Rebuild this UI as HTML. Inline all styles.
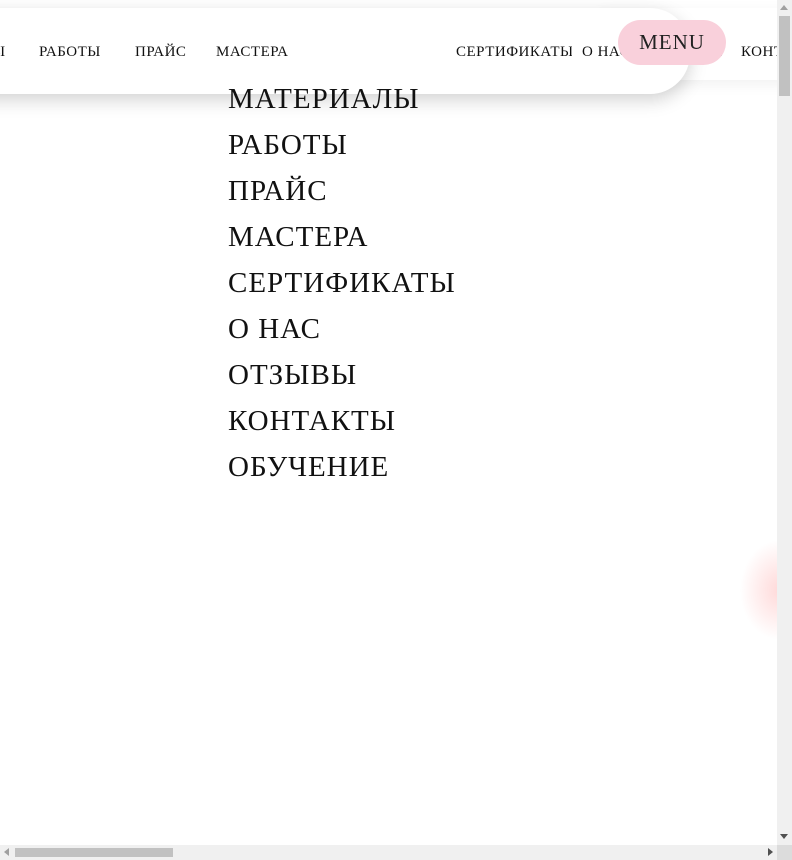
<!DOCTYPE html>
<html><head><meta charset="utf-8"><style>
html,body{margin:0;padding:0;width:792px;height:860px;overflow:hidden;background:#fff;font-family:"Liberation Serif",serif;}
.wrap{position:relative;width:792px;height:860px;overflow:hidden;}
.bar{position:absolute;left:-40px;top:8px;width:730px;height:86px;background:#fff;border-radius:0 40px 40px 0;box-shadow:0 6px 18px rgba(0,0,0,.18);}
.back{position:absolute;left:600px;top:8px;width:190px;height:72px;background:#fff;box-shadow:0 4px 14px rgba(0,0,0,.06);}
.nav{position:absolute;top:44px;font-size:15px;letter-spacing:0.5px;color:#111;white-space:nowrap;}
.menu{position:absolute;left:618px;top:20px;width:108px;height:45px;border-radius:23px;background:#f9d0db;color:#222;font-size:21px;letter-spacing:1px;text-align:center;line-height:45px;}
.list{position:absolute;left:228px;top:76px;}
.list div{font-size:29px;letter-spacing:1px;line-height:46px;color:#111;white-space:nowrap;}
.vs{position:absolute;left:777px;top:0;width:15px;height:845px;background:#f0f0f0;}
.vth{position:absolute;left:779px;top:16px;width:11px;height:80px;background:#c1c1c1;}
.hs{position:absolute;left:0;top:845px;width:777px;height:15px;background:#f0f0f0;}
.hth{position:absolute;left:15px;top:848px;width:158px;height:9px;background:#c1c1c1;}
.corner{position:absolute;left:777px;top:845px;width:15px;height:15px;background:#dcdcdc;}
.glow{position:absolute;left:740px;top:540px;width:80px;height:100px;border-radius:50%;background:radial-gradient(closest-side,rgba(255,200,200,.7),rgba(255,220,220,0));}
</style></head><body><div class="wrap">
<div class="back"></div>
<div class="bar"></div>
<div class="nav" style="left:-8px">Ы</div>
<div class="nav" style="left:39px">РАБОТЫ</div>
<div class="nav" style="left:135px">ПРАЙС</div>
<div class="nav" style="left:216px">МАСТЕРА</div>
<div class="nav" style="left:456px;width:116px;overflow:hidden">СЕРТИФИКАТЫ</div>
<div class="nav" style="left:582px">О НАС</div>
<div class="nav" style="left:656px">ОТЗЫВЫ</div>
<div class="nav" style="left:741px">КОНТАКТЫ</div>
<div class="menu">MENU</div>
<div class="list">
<div>МАТЕРИАЛЫ</div><div>РАБОТЫ</div><div>ПРАЙС</div><div>МАСТЕРА</div><div>СЕРТИФИКАТЫ</div><div>О НАС</div><div>ОТЗЫВЫ</div><div>КОНТАКТЫ</div><div>ОБУЧЕНИЕ</div>
</div>
<div class="glow"></div>
<div class="vs"></div><div class="vth"></div>
<div style="position:absolute;left:780px;top:5px;width:0;height:0;border-left:4px solid transparent;border-right:4px solid transparent;border-bottom:5px solid #a0a0a0"></div>
<div style="position:absolute;left:780px;top:834px;width:0;height:0;border-left:4px solid transparent;border-right:4px solid transparent;border-top:5px solid #505050"></div>
<div class="hs"></div><div class="hth"></div>
<div style="position:absolute;left:4px;top:848px;width:0;height:0;border-top:4px solid transparent;border-bottom:4px solid transparent;border-right:5px solid #a0a0a0"></div>
<div style="position:absolute;left:768px;top:848px;width:0;height:0;border-top:4px solid transparent;border-bottom:4px solid transparent;border-left:5px solid #505050"></div>
<div class="corner"></div>
</div></body></html>
